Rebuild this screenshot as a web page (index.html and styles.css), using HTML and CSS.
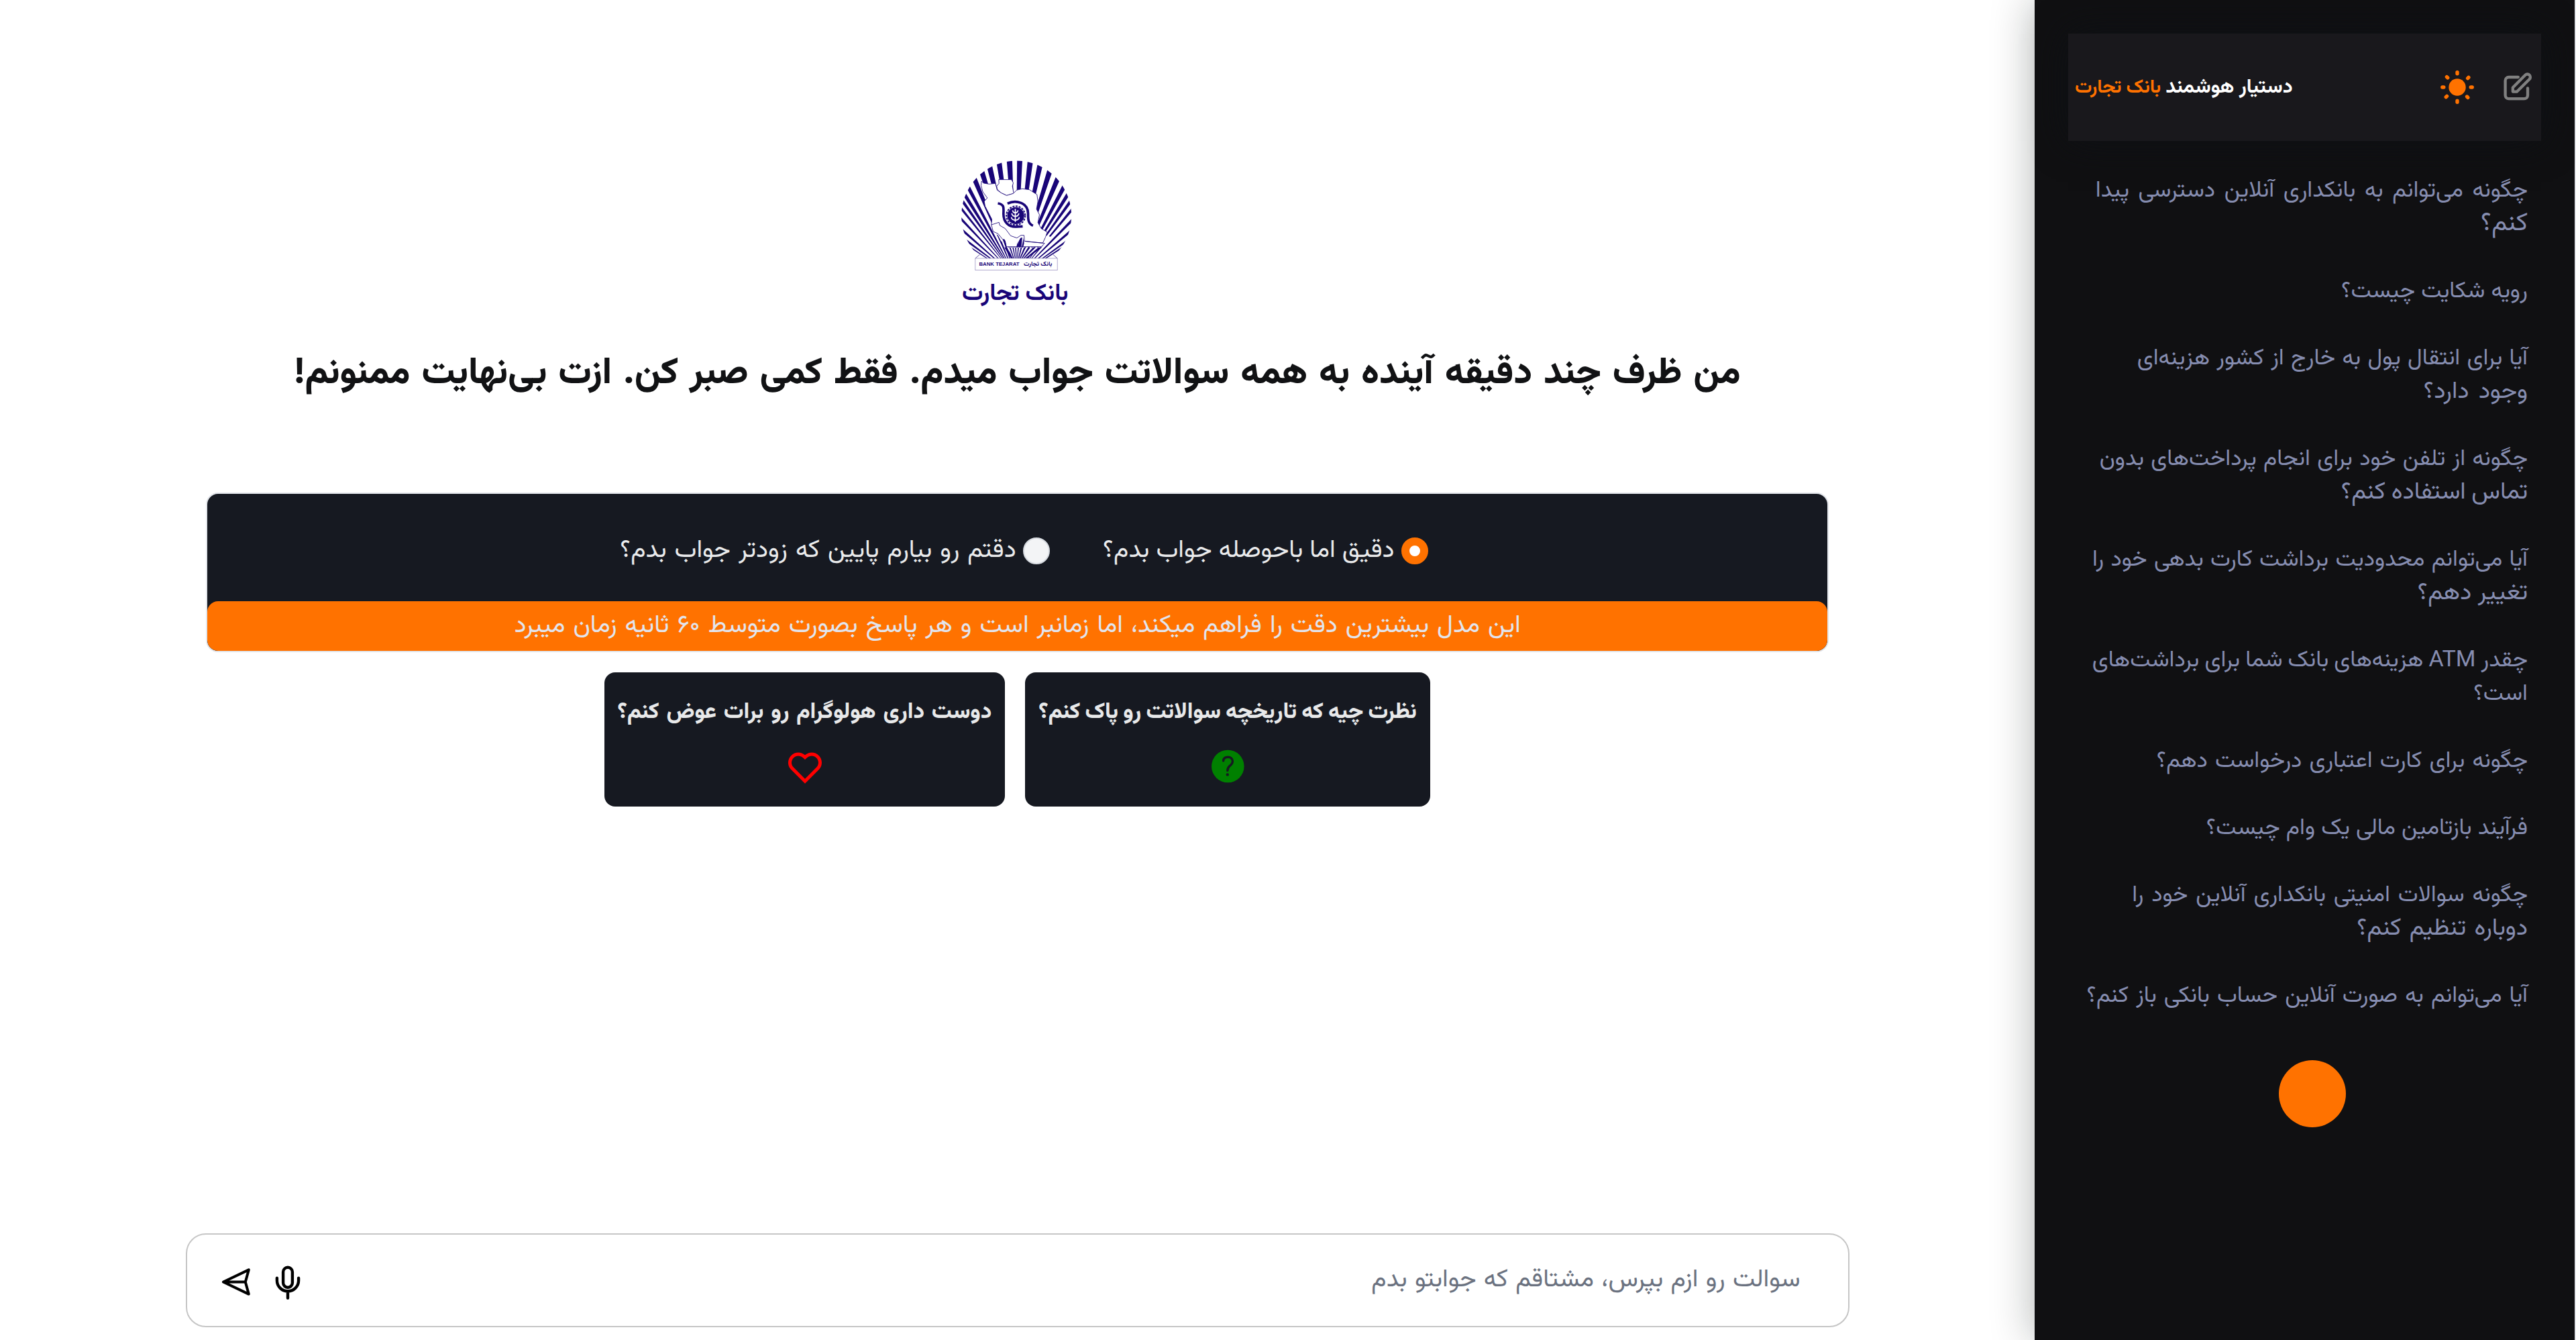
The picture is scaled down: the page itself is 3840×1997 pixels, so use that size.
FILE: index.html
```html
<!DOCTYPE html>
<html lang="fa" dir="rtl">
<head>
<meta charset="utf-8">
<title>دستیار هوشمند بانک تجارت</title>
<link rel="stylesheet" href="styles.css">
</head>
<body>
<div class="app">
  <aside class="sidebar">
    <header class="side-head">
      <div class="side-actions">
        <svg class="icon-edit" width="60" height="60" viewBox="0 0 30 30" fill="none" stroke="#808080" stroke-width="2.15" stroke-linecap="round" stroke-linejoin="round">
          <path d="M15.4 7.5H8.4A2.6 2.6 0 0 0 5.8 10.1V21A2.6 2.6 0 0 0 8.4 23.6H19.9A2.6 2.6 0 0 0 22.5 21V15.7"/>
          <path d="M11.4 18.3V15.2L20.7 5.9A2 2 0 0 1 23.8 9L14.5 18.3Z"/>
        </svg>
        <svg class="icon-sun" width="60" height="60" viewBox="0 0 60 60" stroke="#ff7200" stroke-width="5.4" stroke-linecap="round">
          <circle cx="30" cy="30" r="12.7" fill="#ff7200" stroke="none"/>
          <path d="M30 7.8v2M30 50.2v2M7.8 30h2M50.2 30h2M14.4 14.6l1.3 1.3M45.6 16.6l1.3-1.3M13.2 44.6l1.3-1.3M44.5 44l1.3 1.3"/>
        </svg>
      </div>
      <div class="brand"><span>دستیار هوشمند</span> <span class="accent">بانک تجارت</span></div>
    </header>
    <ul class="questions">
      <li><span class="sp-4">چگونه می‌توانم به بانکداری آنلاین دسترسی پیدا</span><br><span class="wide">کنم؟</span></li>
      <li>رویه شکایت چیست؟</li>
      <li><span class="sp-1">آیا برای انتقال پول به خارج از کشور هزینه‌ای</span><br><span class="short sp-4">وجود دارد؟</span></li>
      <li><span class="sp-1">چگونه از تلفن خود برای انجام پرداخت‌های بدون</span><br><span class="short sp-n1">تماس استفاده کنم؟</span></li>
      <li><span class="sp-1">آیا می‌توانم محدودیت برداشت کارت بدهی خود را</span><br><span class="short">تغییر دهم؟</span></li>
      <li><span class="sp-n1">چقدر ATM هزینه‌های بانک شما برای برداشت‌های</span><br>است؟</li>
      <li><span class="sp-2">چگونه برای کارت اعتباری درخواست دهم؟</span></li>
      <li>فرآیند بازتامین مالی یک وام چیست؟</li>
      <li><span class="sp-3">چگونه سوالات امنیتی بانکداری آنلاین خود را</span><br><span class="short sp-3">دوباره تنظیم کنم؟</span></li>
      <li><span class="sp-2">آیا می‌توانم به صورت آنلاین حساب بانکی باز کنم؟</span></li>
    </ul>
    <div class="orb"></div>
  </aside>

  <main class="main">
    <svg class="logo" viewBox="4.5 0 690 750">
      <defs>
        <clipPath id="dome"><path d="M188 495A246 246 0 1 1 500 495Z"/></clipPath>
      </defs>
      <g clip-path="url(#dome)" fill="#190578">
        <path d="M342 580L300 50H325ZM342 580L252 50L276 50ZM342 580L205 60L231 60ZM342 580L164 70L190 70ZM342 580L122 90L148 90ZM342 580L82 110L104 110ZM342 580L58 140L80 140ZM342 580L56 185L74 185ZM342 580L68 244L82 244ZM342 580L60 288L74 286ZM342 580L60 340L76 338ZM342 580L60 378L76 376ZM342 580L80 412L92 412Z"/>
        <path d="M342 580L347 50H371ZM342 580L395 50L420 50ZM342 580L441 60L466 60ZM342 580L488 80L514 80ZM342 580L532 100L558 100ZM342 580L574 120L598 120ZM342 580L600 150L622 150ZM342 580L610 194L628 194ZM342 580L610 246L626 246ZM342 580L612 296L628 298ZM342 580L612 344L628 346ZM342 580L608 384L622 386ZM342 580L590 416L602 418Z"/>
      </g>
      <g fill="#fff" stroke="#190578" stroke-width="2.5" stroke-linejoin="round">
        <path d="M228 345L240 375L262 392L276 420Q288 398 296 420L302 445H344Q352 402 374 400L382 444H455L476 428L500 400L440 380L280 320Z" stroke="none"/>
        <path d="M265 143H322L330 158L326 172L332 205L300 214L275 202L258 186L256 172L266 160Z"/>
        <path d="M188 150L198 159L222 163L250 160L258 190L275 202L300 214L330 205L345 190L370 184L402 188L436 210L440 240L434 275L447 300L440 335L455 362L482 378L474 400L462 426L410 422L380 418L378 392L364 392L346 404L318 394L294 362L270 348L266 334L232 345L234 320L204 262L200 240L214 225L194 198L186 170Z"/>
        <path d="M232 345L240 375L262 385L284 412M380 418L470 428L455 443H302" fill="none"/>
      </g>
      <path d="M284 414Q294 398 300 445M346 444Q356 404 370 402L366 444" fill="#190578"/>
      <path d="M330 495L302 446H455L382 495Z" fill="#fff"/>
      <path d="M302 446L328 495H320L290 446ZM312 446H318L334 495H330ZM326 446H331L340 495H337ZM338 446H343L345 495H342ZM350 446H355L350 495H347ZM363 446H369L356 495H352ZM378 446H386L363 495H358ZM396 446H406L371 495H366ZM418 446H430L380 495H374ZM442 446H458L392 495H384Z" fill="#190578"/>
      <g fill="none" stroke="#190578">
        <path d="M261 249C290 254 287 268 286 296C286 332 308 355 342 354L372 352" stroke-width="11"/>
        <path d="M304 250C340 232 398 244 396 298C396 322 397 340 418 349" stroke-width="11"/>
        <circle cx="341" cy="304" r="42" stroke-width="6" stroke-dasharray="9 5"/>
      </g>
      <circle cx="341" cy="304" r="38" fill="#190578"/>
      <path d="M339 274V332M339 292Q328 290 327 280M339 292Q350 290 351 280M339 308Q325 306 323 294M339 308Q353 306 355 294M339 325Q323 323 321 311M339 325Q355 323 357 311" fill="none" stroke="#fff" stroke-width="5"/>
      <path d="M180 478L160 495M508 478L527 495" stroke="#190578" stroke-width="2"/>
      <rect x="160" y="495" width="367" height="53" fill="#fff" stroke="#8a80b8" stroke-width="2"/>
      <text class="logo-latin" x="177" y="529" textLength="180" lengthAdjust="spacingAndGlyphs" direction="ltr">BANK TEJARAT</text>
      <text class="logo-small" x="440" y="528">بانک تجارت</text>
      <text class="logo-name" x="338" y="681">بانک تجارت</text>
    </svg>

    <h1 class="headline">من ظرف چند دقیقه آینده به همه سوالاتت جواب میدم. فقط کمی صبر کن. ازت بی‌نهایت ممنونم!</h1>

    <section class="panel">
      <div class="modes">
        <div class="mode"><span class="radio radio-on"></span><span class="mode-label">دقیق اما باحوصله جواب بدم؟</span></div>
        <div class="mode"><span class="radio"></span><span class="mode-label sp-2">دقتم رو بیارم پایین که زودتر جواب بدم؟</span></div>
      </div>
      <div class="banner">این مدل بیشترین دقت را فراهم میکند، اما زمانبر است و هر پاسخ بصورت متوسط ۶۰ ثانیه زمان میبرد</div>
    </section>

    <section class="cards">
      <div class="card card-history">
        <h2 class="sp-n1">نظرت چیه که تاریخچه سوالاتت رو پاک کنم؟</h2>
        <svg width="60" height="60" viewBox="0 0 60 60">
          <circle cx="30.3" cy="28" r="24.3" fill="#008000"/>
          <path d="M23.6 19.8C24 15.6 26.8 14.2 30.4 14.2C34.6 14.2 37.4 17 37.4 20.6C37.4 24 35.6 25.6 33 27.6C30.4 29.8 29.8 31.2 29.8 34.4" fill="none" stroke="#161921" stroke-width="3.4" stroke-linecap="round"/>
          <circle cx="29.8" cy="40.4" r="2.2" fill="#161921"/>
        </svg>
      </div>
      <div class="card card-hologram">
        <h2 class="sp-3">دوست داری هولوگرام رو برات عوض کنم؟</h2>
        <svg width="60" height="60" viewBox="0 0 24 24" fill="#f00"><path d="M12.001 4.529c2.349-2.109 5.979-2.039 8.242.228 2.262 2.268 2.34 5.88.236 8.236l-8.48 8.492-8.478-8.492c-2.104-2.356-2.025-5.974.236-8.236 2.265-2.264 5.888-2.34 8.244-.228zm6.826 1.641c-1.5-1.502-3.92-1.563-5.49-.153l-1.335 1.198-1.336-1.197c-1.575-1.412-3.99-1.35-5.494.154-1.49 1.49-1.565 3.875-.192 5.451L12 18.654l7.02-7.03c1.374-1.577 1.299-3.959-.193-5.454z"/></svg>
      </div>
    </section>

    <div class="composer">
      <span class="placeholder sp-1">سوالت رو ازم بپرس، مشتاقم که جوابتو بدم</span>
      <div class="composer-actions">
        <svg width="48" height="60" viewBox="0 0 48 60" fill="none" stroke="#000" stroke-width="4.4" stroke-linecap="round">
          <rect x="17.1" y="6.7" width="13.8" height="30" rx="6.9"/>
          <path d="M7.9 22.6V26.2A16.1 16.1 0 0 0 40.1 26.2V22.6M24 43V52.6"/>
        </svg>
        <svg width="48" height="60" viewBox="0 0 48 60" fill="none" stroke="#000" stroke-width="4" stroke-linecap="round" stroke-linejoin="round">
          <path d="M4.9 28.5L42.8 10.4L37.8 28.5L42.8 46.6ZM4.9 28.5H37.8"/>
        </svg>
      </div>
    </div>
  </main>
</div>
</body>
</html>
```
FILE: styles.css
```css
* { box-sizing: border-box; margin: 0; padding: 0; }

body {
  background: #fff;
  font-family: Vazirmatn, "DejaVu Sans", sans-serif;
}

svg { display: block; }

.app {
  display: flex;
  height: 1997px;
  overflow: hidden;
}

/* Sidebar */
.sidebar {
  flex: none;
  width: 807px;
  padding: 50px 50px 0;
  background: #101012;
  border-right: 2px solid #e5e7eb;
  box-shadow: 0 0 60px rgba(8, 20, 16, .32);
}

.side-head {
  display: flex;
  align-items: center;
  justify-content: space-between;
  height: 160px;
  padding: 0 5px 0 10px;
  background: #19181c;
  box-shadow: 0 0 50px #0e1115;
}

.side-actions { display: flex; gap: 30px; }

.brand {
  display: flex;
  gap: 7px;
  padding-top: 2px;
  color: #fff;
  font-size: 30px;
  font-weight: 700;
  line-height: 50px;
  white-space: nowrap;
}

.accent { color: #ff7200; font-size: 28.3px; }

.questions {
  display: flex;
  flex-direction: column;
  gap: 50px;
  padding: 50px 20px 0 0;
  list-style: none;
  color: #868db0;
  font-size: 34px;
  line-height: 50px;
  white-space: nowrap;
}

.questions .wide { font-size: 38px; line-height: 1; }
.questions .short { font-size: 36px; line-height: 1; }

.orb {
  width: 100px;
  height: 100px;
  margin: 70px 291px 0 0;
  border-radius: 50%;
  background: #ff7200;
}

/* Main column */
.main {
  flex: 1;
  display: flex;
  flex-direction: column;
  align-items: center;
  padding: 220px 0 19px;
}

.logo { width: 230px; height: 250px; flex: none; }

.logo text { fill: #190578; font-weight: 700; }
.logo-latin { font-family: "Liberation Sans", sans-serif; font-size: 20px; }
.logo-small { font-size: 28px; text-anchor: middle; }
.logo-name { font-size: 105px; text-anchor: middle; }

.headline {
  margin-top: 48px;
  color: #111214;
  font-size: 55px;
  font-weight: 800;
  line-height: 80px;
  white-space: nowrap;
  word-spacing: 3.2px;
}

.panel {
  width: 2419px;
  height: 238px;
  margin-top: 136px;
  overflow: hidden;
  border: 2px solid #e2e5ea;
  border-radius: 18px;
  background: #161921;
}

.modes {
  display: flex;
  align-items: center;
  gap: 79px;
  height: 160px;
  padding: 10px 595px 0 0;
}

.mode { display: flex; align-items: center; gap: 10.5px; }

.mode-label {
  color: #eaebec;
  font-size: 37.5px;
  line-height: 50px;
  white-space: nowrap;
}

.radio {
  width: 40px;
  height: 40px;
  border: 2px solid #d6dae0;
  border-radius: 50%;
  background: #f3f4f6;
}

.radio-on {
  border: 12px solid #ff7200;
  background: #fff;
}

.banner {
  height: 74px;
  border-radius: 16px;
  background: #ff7200;
  color: #e2e5ee;
  font-size: 37.5px;
  line-height: 75px;
  text-align: center;
  white-space: nowrap;
  word-spacing: 1.9px;
}

.cards { display: flex; gap: 30px; margin-top: 30px; }

.card {
  display: flex;
  flex-direction: column;
  align-items: center;
  gap: 27px;
  height: 200px;
  padding-top: 35px;
  border-radius: 16px;
  background: #161921;
  color: #e8e9ea;
}

.card-history { width: 604px; }
.card-hologram { width: 597px; }

.card h2 {
  font-size: 33px;
  font-weight: 800;
  line-height: 50px;
  white-space: nowrap;
}

.composer {
  display: flex;
  align-items: center;
  justify-content: space-between;
  width: 2480px;
  height: 140px;
  margin-top: auto;
  padding: 0 71px 0 49px;
  border: 2px solid #c6c6c6;
  border-radius: 30px;
}

.placeholder {
  color: #6b7280;
  font-size: 37.5px;
  line-height: 50px;
}

.composer-actions { display: flex; gap: 29px; padding-top: 8px; }

/* Word spacing steps */
.sp-n1 { word-spacing: -1px; }
.sp-1 { word-spacing: 1.2px; }
.sp-2 { word-spacing: 2px; }
.sp-3 { word-spacing: 2.7px; }
.sp-4 { word-spacing: 4.5px; }
```
